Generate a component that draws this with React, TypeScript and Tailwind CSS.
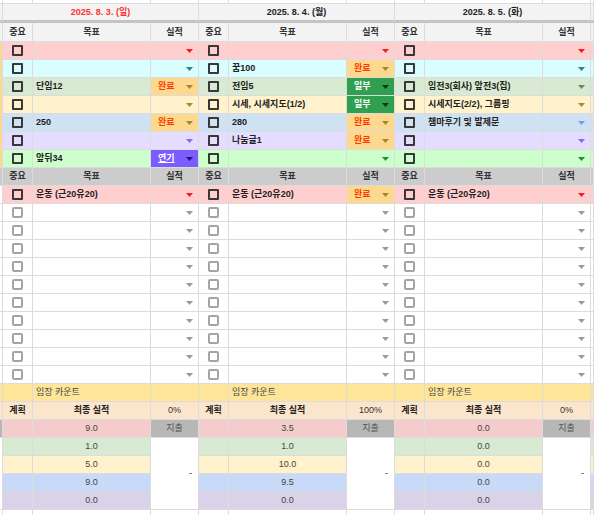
import React from "react";

type Tone = "pink" | "cyan" | "green" | "yellow" | "blue" | "purple" | "lime" | "white";
type Status = "완료" | "일부" | "연기";

interface Entry {
  goal?: string;
  status?: Status;
}

const LINE = "border-r border-b border-[#dcdcdc]";

const TONE: Record<Tone, { bg: string; arrow: string }> = {
  pink: { bg: "bg-[#ffcfcf]", arrow: "fill-[#e8212b]" },
  cyan: { bg: "bg-[#dafdff]", arrow: "fill-[#2f8585]" },
  green: { bg: "bg-[#d9ead3]", arrow: "fill-[#6b8663]" },
  yellow: { bg: "bg-[#fff2cc]", arrow: "fill-[#a08838]" },
  blue: { bg: "bg-[#cfe2f3]", arrow: "fill-[#7c9fdc]" },
  purple: { bg: "bg-[#e4ddff]", arrow: "fill-[#8a68f0]" },
  lime: { bg: "bg-[#ccffcc]", arrow: "fill-[#2a8a36]" },
  white: { bg: "bg-white", arrow: "fill-[#9a9a9a]" },
};

const STATUS: Record<Status, { cell: string; arrow: string }> = {
  완료: { cell: "bg-[#fdd98f] text-[#ff3d00]", arrow: "fill-[#a8862c]" },
  일부: { cell: "bg-[#30a050] text-white", arrow: "fill-[#10361a]" },
  연기: { cell: "bg-[#7a5cff] text-white underline", arrow: "fill-[#20127a]" },
};

const DAYS = [
  { date: "2025. 8. 3. (일)", red: true, rate: "0%", spend: "9.0", vals: ["1.0", "5.0", "9.0", "0.0"] },
  { date: "2025. 8. 4. (월)", red: false, rate: "100%", spend: "3.5", vals: ["1.0", "10.0", "9.5", "0.0"] },
  { date: "2025. 8. 5. (화)", red: false, rate: "0%", spend: "0.0", vals: ["0.0", "0.0", "0.0", "0.0"] },
];

const TOP_ROWS: { tone: Tone; cells: Entry[] }[] = [
  { tone: "pink", cells: [{}, {}, {}] },
  { tone: "cyan", cells: [{}, { goal: "꿈100", status: "완료" }, {}] },
  {
    tone: "green",
    cells: [
      { goal: "단임12", status: "완료" },
      { goal: "전임5", status: "일부" },
      { goal: "임전3(회사) 앞전3(집)" },
    ],
  },
  {
    tone: "yellow",
    cells: [{}, { goal: "시세, 시세지도(1/2)", status: "일부" }, { goal: "시세지도(2/2), 그룹핑" }],
  },
  {
    tone: "blue",
    cells: [
      { goal: "250", status: "완료" },
      { goal: "280", status: "완료" },
      { goal: "챔마후기 및 발제문" },
    ],
  },
  { tone: "purple", cells: [{}, { goal: "나눔글1", status: "완료" }, {}] },
  { tone: "lime", cells: [{ goal: "앞뒤34", status: "연기" }, {}, {}] },
];

// bottom summary rows: first one pairs with the grey "지출" cell, the rest share a merged "-" cell
const SUM_TONES = ["bg-[#f4cccc]", "bg-[#d9ead3]", "bg-[#fff2cc]", "bg-[#c9daf8]", "bg-[#d9d2e9]"];

const Arrow = ({ fill }: { fill: string }) => (
  <svg width="7" height="4" viewBox="0 0 7 4" className={`shrink-0 ${fill}`}>
    <path d="M0 0H7L3.5 4Z" />
  </svg>
);

const Box = ({ light }: { light?: boolean }) =>
  light ? (
    <span className="w-[11px] h-[11px] border-2 border-[#a4a4a4] rounded-[2px]" />
  ) : (
    <span className="w-[11px] h-[11px] border-2 border-[#383838] rounded-[1px]" />
  );

const GoalRow = ({ tone, cells, strip }: { tone: Tone; cells: Entry[]; strip: string }) => {
  const t = TONE[tone];
  return (
    <>
      <div className={`h-[18px] ${LINE} ${strip}`} />
      {cells.map((c, i) => (
        <React.Fragment key={i}>
          <div className={`h-[18px] ${LINE} ${t.bg} flex items-center justify-center`}>
            <Box light={tone === "white"} />
          </div>
          <div className={`h-[18px] ${LINE} ${t.bg} flex items-center pl-[3px] font-bold whitespace-nowrap overflow-hidden`}>
            {c.goal}
          </div>
          {c.status ? (
            <div
              className={`h-[18px] ${LINE} ${STATUS[c.status].cell} flex items-center justify-between pl-[7px] pr-[5px] font-bold`}
            >
              <span>{c.status}</span>
              <Arrow fill={STATUS[c.status].arrow} />
            </div>
          ) : (
            <div className={`h-[18px] ${LINE} ${t.bg} flex items-center justify-end pr-[5px]`}>
              <Arrow fill={t.arrow} />
            </div>
          )}
        </React.Fragment>
      ))}
      <div className={`h-[18px] ${LINE} ${t.bg}`} />
    </>
  );
};

const HeaderRow = ({ bg }: { bg: string }) => (
  <>
    <div className={`h-[18px] ${LINE} ${bg}`} />
    {DAYS.map((d) => (
      <React.Fragment key={d.date}>
        <div className={`h-[18px] ${LINE} ${bg} flex items-center justify-center font-bold text-[#333]`}>중요</div>
        <div className={`h-[18px] ${LINE} ${bg} flex items-center justify-center font-bold text-[#333]`}>목표</div>
        <div className={`h-[18px] ${LINE} ${bg} flex items-center justify-center font-bold text-[#333]`}>실적</div>
      </React.Fragment>
    ))}
    <div className={`h-[18px] ${LINE} ${bg}`} />
  </>
);

export default function App() {
  return (
    <div className="w-[594px] h-[515px] overflow-hidden bg-white font-['Liberation_Sans','Noto_Sans_CJK_KR',sans-serif] text-[9px] leading-none text-[#222]">
      <div className="grid grid-cols-[3px_repeat(3,30px_118px_48px)_1fr]">
        {/* partial row above the dates */}
        {Array.from({ length: 11 }).map((_, i) => (
          <div key={i} className={`h-[4px] ${LINE}`} />
        ))}

        {/* dates */}
        <div className="h-[19px] bg-[#f3f3f3] border-r border-[#dcdcdc] border-b-[3px] border-b-[#c4c4c4]" />
        {DAYS.map((d) => (
          <div
            key={d.date}
            className={`col-span-3 h-[19px] bg-[#f3f3f3] border-r border-[#dcdcdc] border-b-[3px] border-b-[#c4c4c4] flex items-center justify-center font-bold ${
              d.red ? "text-[#ff3030]" : "text-[#222]"
            }`}
          >
            {d.date}
          </div>
        ))}
        <div className="h-[19px] bg-[#f3f3f3] border-r border-[#dcdcdc] border-b-[3px] border-b-[#c4c4c4]" />

        <div className="contents [&>div]:h-[19px]">
          <HeaderRow bg="bg-[#f3f3f3]" />
        </div>

        {TOP_ROWS.map((r, i) => (
          <GoalRow key={i} tone={r.tone} cells={r.cells} strip="bg-[#fdd98f]" />
        ))}

        <HeaderRow bg="bg-[#cccccc]" />

        <GoalRow
          tone="pink"
          strip="bg-white"
          cells={[
            { goal: "운동 (근20유20)" },
            { goal: "운동 (근20유20)", status: "완료" },
            { goal: "운동 (근20유20)" },
          ]}
        />

        {Array.from({ length: 10 }).map((_, i) => (
          <GoalRow key={i} tone="white" strip="bg-white" cells={[{}, {}, {}]} />
        ))}

        {/* 임장 카운트 */}
        <div className={`h-[18px] ${LINE} bg-[#ffe59a]`} />
        {DAYS.map((d) => (
          <React.Fragment key={d.date}>
            <div className={`h-[18px] ${LINE} bg-[#ffe59a]`} />
            <div className={`h-[18px] ${LINE} bg-[#ffe59a] flex items-center pl-[3px] text-[#444]`}>임장 카운트</div>
            <div className={`h-[18px] ${LINE} bg-[#ffe59a]`} />
          </React.Fragment>
        ))}
        <div className={`h-[18px] ${LINE} bg-[#ffe59a]`} />

        {/* 계획 / 최종 실적 */}
        <div className={`h-[18px] ${LINE} bg-[#fce5cd]`} />
        {DAYS.map((d) => (
          <React.Fragment key={d.date}>
            <div className={`h-[18px] ${LINE} bg-[#fce5cd] flex items-center justify-center font-bold`}>계획</div>
            <div className={`h-[18px] ${LINE} bg-[#fce5cd] flex items-center justify-center font-bold`}>최종 실적</div>
            <div className={`h-[18px] ${LINE} bg-[#fce5cd] flex items-center justify-center text-[#333]`}>{d.rate}</div>
          </React.Fragment>
        ))}
        <div className={`h-[18px] ${LINE} bg-[#fce5cd]`} />

        {/* 지출 */}
        <div className={`h-[18px] ${LINE} bg-[#b7b7b7]`} />
        {DAYS.map((d) => (
          <React.Fragment key={d.date}>
            <div className={`h-[18px] ${LINE} ${SUM_TONES[0]}`} />
            <div className={`h-[18px] ${LINE} ${SUM_TONES[0]} flex items-center justify-center text-[#444]`}>{d.spend}</div>
            <div className={`h-[18px] ${LINE} bg-[#b7b7b7] flex items-center justify-center text-[#555]`}>지출</div>
          </React.Fragment>
        ))}
        <div className={`h-[18px] ${LINE} ${SUM_TONES[0]}`} />

        {SUM_TONES.slice(1).map((tone, r) => (
          <React.Fragment key={tone}>
            {r === 0 && <div className={`row-span-4 ${LINE} bg-white`} />}
            {DAYS.map((d) => (
              <React.Fragment key={d.date}>
                <div className={`h-[18px] ${LINE} ${tone}`} />
                <div className={`h-[18px] ${LINE} ${tone} flex items-center justify-center text-[#444]`}>{d.vals[r]}</div>
                {r === 0 && (
                  <div className={`row-span-4 ${LINE} bg-white flex items-center justify-end pr-[6px] text-[#222]`}>-</div>
                )}
              </React.Fragment>
            ))}
            <div className={`h-[18px] ${LINE} ${tone}`} />
          </React.Fragment>
        ))}

        {Array.from({ length: 11 }).map((_, i) => (
          <div key={i} className="h-[5px] border-r border-[#dcdcdc]" />
        ))}
      </div>
    </div>
  );
}
